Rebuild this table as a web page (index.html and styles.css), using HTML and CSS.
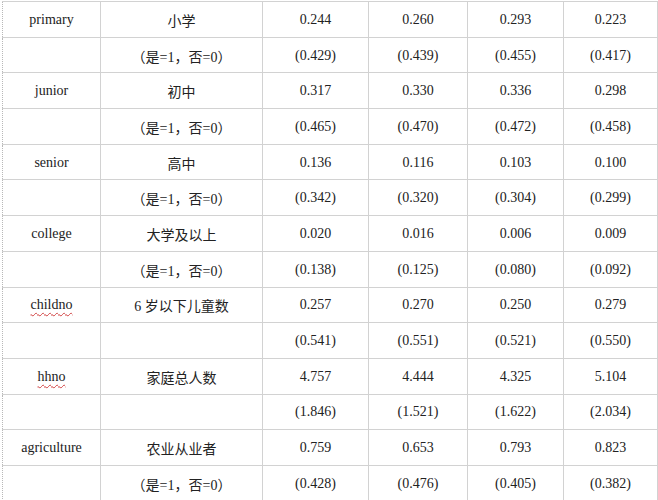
FILE: index.html
```html
<!DOCTYPE html>
<html lang="zh">
<head>
<meta charset="utf-8">
<title>变量描述统计</title>
<link rel="stylesheet" href="styles.css">
</head>
<body>
<table class="stats">
  <colgroup>
    <col class="c-var"><col class="c-desc"><col class="c-n1"><col class="c-n2"><col class="c-n3"><col class="c-n4">
  </colgroup>
  <tbody>
    <tr><td>primary</td><td class="zh">小学</td><td>0.244</td><td>0.260</td><td>0.293</td><td>0.223</td></tr>
    <tr><td></td><td class="zh">（是=1，否=0）</td><td>(0.429)</td><td>(0.439)</td><td>(0.455)</td><td>(0.417)</td></tr>
    <tr><td>junior</td><td class="zh">初中</td><td>0.317</td><td>0.330</td><td>0.336</td><td>0.298</td></tr>
    <tr><td></td><td class="zh">（是=1，否=0）</td><td>(0.465)</td><td>(0.470)</td><td>(0.472)</td><td>(0.458)</td></tr>
    <tr><td>senior</td><td class="zh">高中</td><td>0.136</td><td>0.116</td><td>0.103</td><td>0.100</td></tr>
    <tr><td></td><td class="zh">（是=1，否=0）</td><td>(0.342)</td><td>(0.320)</td><td>(0.304)</td><td>(0.299)</td></tr>
    <tr><td>college</td><td class="zh">大学及以上</td><td>0.020</td><td>0.016</td><td>0.006</td><td>0.009</td></tr>
    <tr><td></td><td class="zh">（是=1，否=0）</td><td>(0.138)</td><td>(0.125)</td><td>(0.080)</td><td>(0.092)</td></tr>
    <tr><td><span class="spell">childno</span></td><td class="zh">6 岁以下儿童数</td><td>0.257</td><td>0.270</td><td>0.250</td><td>0.279</td></tr>
    <tr><td></td><td class="zh"></td><td>(0.541)</td><td>(0.551)</td><td>(0.521)</td><td>(0.550)</td></tr>
    <tr><td><span class="spell">hhno</span></td><td class="zh">家庭总人数</td><td>4.757</td><td>4.444</td><td>4.325</td><td>5.104</td></tr>
    <tr><td></td><td class="zh"></td><td>(1.846)</td><td>(1.521)</td><td>(1.622)</td><td>(2.034)</td></tr>
    <tr><td>agriculture</td><td class="zh">农业从业者</td><td>0.759</td><td>0.653</td><td>0.793</td><td>0.823</td></tr>
    <tr><td></td><td class="zh">（是=1，否=0）</td><td>(0.428)</td><td>(0.476)</td><td>(0.405)</td><td>(0.382)</td></tr>
  </tbody>
</table>
</body>
</html>
```
FILE: styles.css
```css
html, body {
  margin: 0;
  padding: 0;
  background: #ffffff;
}
body {
  padding: 1px 0 0 2px;
  overflow: hidden;
}
.stats {
  border-collapse: collapse;
  table-layout: fixed;
  width: 655px;
  font-family: "Liberation Serif", "Noto Sans CJK SC", serif;
  font-size: 14px;
  color: #222222;
}
.c-var { width: 98px; }
.c-desc { width: 162px; }
.c-n1 { width: 106px; }
.c-n2 { width: 99px; }
.c-n3 { width: 96px; }
.c-n4 { width: 94px; }
.stats tr {
  height: 35.7px;
}
.stats td {
  border: 1px solid #d2d2d2;
  text-align: center;
  vertical-align: middle;
  padding: 1px 0 0 0;
  white-space: nowrap;
}
.stats td:first-child {
  border-left: 1px dotted #b8b8b8;
}
.stats .zh {
  font-family: "Liberation Serif", "Noto Sans CJK SC", serif;
  font-weight: 400;
}
.spell {
  text-decoration: underline wavy #d04040;
  text-decoration-thickness: 1px;
  text-underline-offset: 3px;
}
```
